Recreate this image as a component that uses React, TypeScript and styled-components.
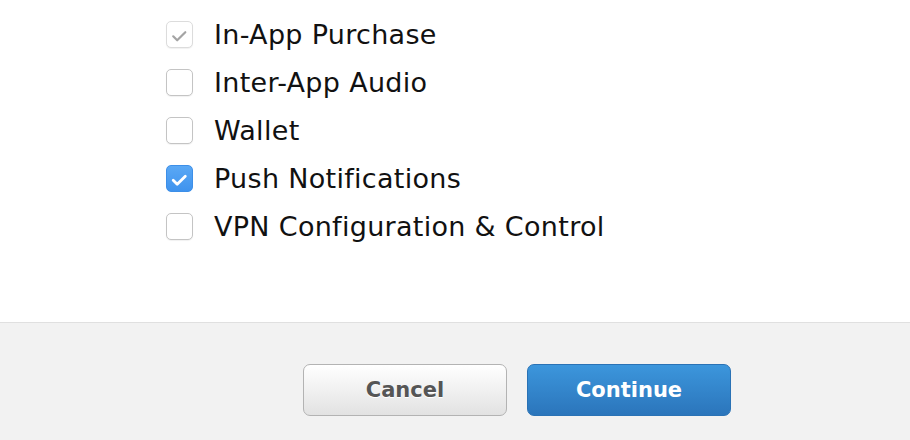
import React from "react";
import styled, { createGlobalStyle } from "styled-components";

const GlobalStyle = createGlobalStyle`
  html, body {
    margin: 0;
    padding: 0;
    background: #ffffff;
  }
  body {
    font-family: "DejaVu Sans", "Liberation Sans", sans-serif;
  }
`;

const capabilities = [
  { name: "In-App Purchase", checked: true, disabled: true },
  { name: "Inter-App Audio", checked: false },
  { name: "Wallet", checked: false },
  { name: "Push Notifications", checked: true },
  { name: "VPN Configuration & Control", checked: false },
];

const Check = ({ checked, disabled }: { checked?: boolean; disabled?: boolean }) => (
  <Box $checked={checked} $disabled={disabled}>
    {checked && (
      <svg width="25" height="25" viewBox="0 0 25 25">
        <path
          d="M6.2 14.3 L10.2 18.3 L18.3 10.2"
          fill="none"
          stroke={disabled ? "#a4a4a4" : "#ffffff"}
          strokeWidth={disabled ? 2.2 : 2.8}
          strokeLinecap="round"
          strokeLinejoin="round"
        />
      </svg>
    )}
  </Box>
);

export default function App() {
  return (
    <Page>
      <GlobalStyle />
      <List>
        {capabilities.map((c) => (
          <Row key={c.name}>
            <Check checked={c.checked} disabled={c.disabled} />
            <Label>{c.name}</Label>
          </Row>
        ))}
      </List>
      <Footer>
        <Button>Cancel</Button>
        <Button $primary>Continue</Button>
      </Footer>
    </Page>
  );
}

const Page = styled.div`
  width: 910px;
  height: 440px;
  display: flex;
  flex-direction: column;
  overflow: hidden;
`;

const List = styled.div`
  height: 322px;
  box-sizing: border-box;
  padding: 10px 0 0 166px;
  display: flex;
  flex-direction: column;
`;

const Row = styled.div`
  height: 48px;
  display: flex;
  align-items: center;
  gap: 21px;
`;

const Box = styled.span<{ $checked?: boolean; $disabled?: boolean }>`
  width: 27px;
  height: 27px;
  box-sizing: border-box;
  border-radius: 5px;
  display: flex;
  align-items: center;
  justify-content: center;
  border: 1px solid
    ${(p) => (p.$checked && !p.$disabled ? "#3d8fe8" : p.$disabled ? "#dcdcdc" : "#c4c4c4")};
  background: ${(p) =>
    p.$checked && !p.$disabled ? "linear-gradient(#5aa8f5, #3f93ee)" : "#ffffff"};
  box-shadow: ${(p) => (p.$checked && !p.$disabled ? "none" : "0 1px 1px rgba(0,0,0,0.06)")};
`;

const Label = styled.span`
  font-size: 27px;
  color: #111111;
  letter-spacing: 0.3px;
  line-height: 1;
`;

const Footer = styled.div`
  flex: 1;
  background: #f2f2f2;
  border-top: 1px solid #e0e0e0;
  display: flex;
  align-items: flex-start;
  gap: 20px;
  padding: 41px 0 0 303px;
`;

const Button = styled.button<{ $primary?: boolean }>`
  width: 204px;
  height: 52px;
  box-sizing: border-box;
  border-radius: 7px;
  font-family: "DejaVu Sans", "Liberation Sans", sans-serif;
  font-weight: bold;
  font-size: 21px;
  cursor: pointer;
  color: ${(p) => (p.$primary ? "#ffffff" : "#555555")};
  border: 1px solid ${(p) => (p.$primary ? "#2a72b5" : "#b3b3b3")};
  background: ${(p) =>
    p.$primary
      ? "linear-gradient(#3c96dc, #2b75bb)"
      : "linear-gradient(#ffffff, #e2e2e2)"};
  text-shadow: ${(p) => (p.$primary ? "none" : "0 1px 0 #ffffff")};
`;
